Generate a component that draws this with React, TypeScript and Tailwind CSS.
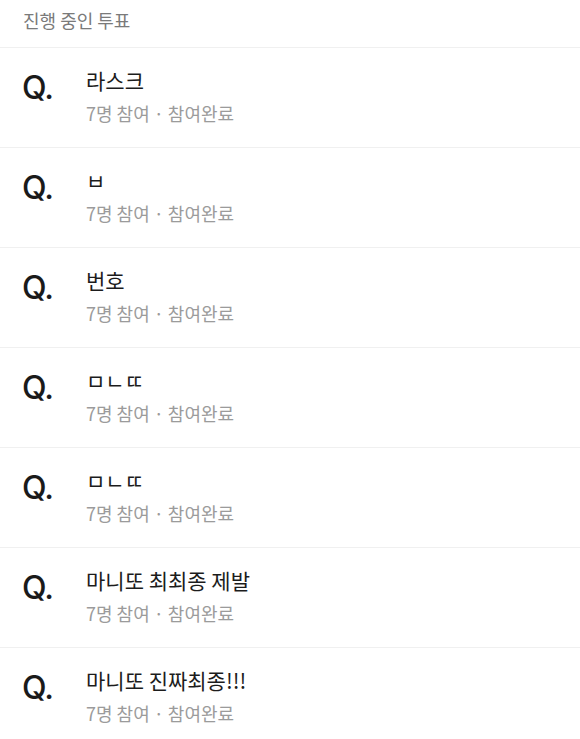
const polls = [
  '라스크',
  'ㅂ',
  '번호',
  'ㅁㄴㄸ',
  'ㅁㄴㄸ',
  '마니또 최최종 제발',
  '마니또 진짜최종!!!',
];

export default function App() {
  return (
    <div
      className="w-[580px] h-[739px] overflow-hidden bg-white"
      style={{ fontFamily: '"Noto Sans CJK KR", "Noto Sans", sans-serif' }}
    >
      <div className="h-[47px] px-[23px] pt-[6px] text-[18px] leading-[28px] text-[#7a7a7a]">
        진행 중인 투표
      </div>
      <ul>
        {polls.map((title, i) => (
          <li key={i} className="h-[100px] border-t border-[#f0f0f0] px-[22px] flex items-start">
            <span
              className="w-[64px] pt-[24px] text-[32px] leading-[32px] font-medium tracking-[-1px] text-[#1a1a1a]"
              style={{ fontFamily: 'Inter, "Liberation Sans", sans-serif' }}
            >
              Q.
            </span>
            <div className="pt-[18px]">
              <p className="text-[21px] leading-[28px] text-[#1c1c1c]">{title}</p>
              <p className="mt-[5px] text-[18px] leading-[28px] text-[#9b9b9b]">7명 참여 · 참여완료</p>
            </div>
          </li>
        ))}
      </ul>
    </div>
  );
}
